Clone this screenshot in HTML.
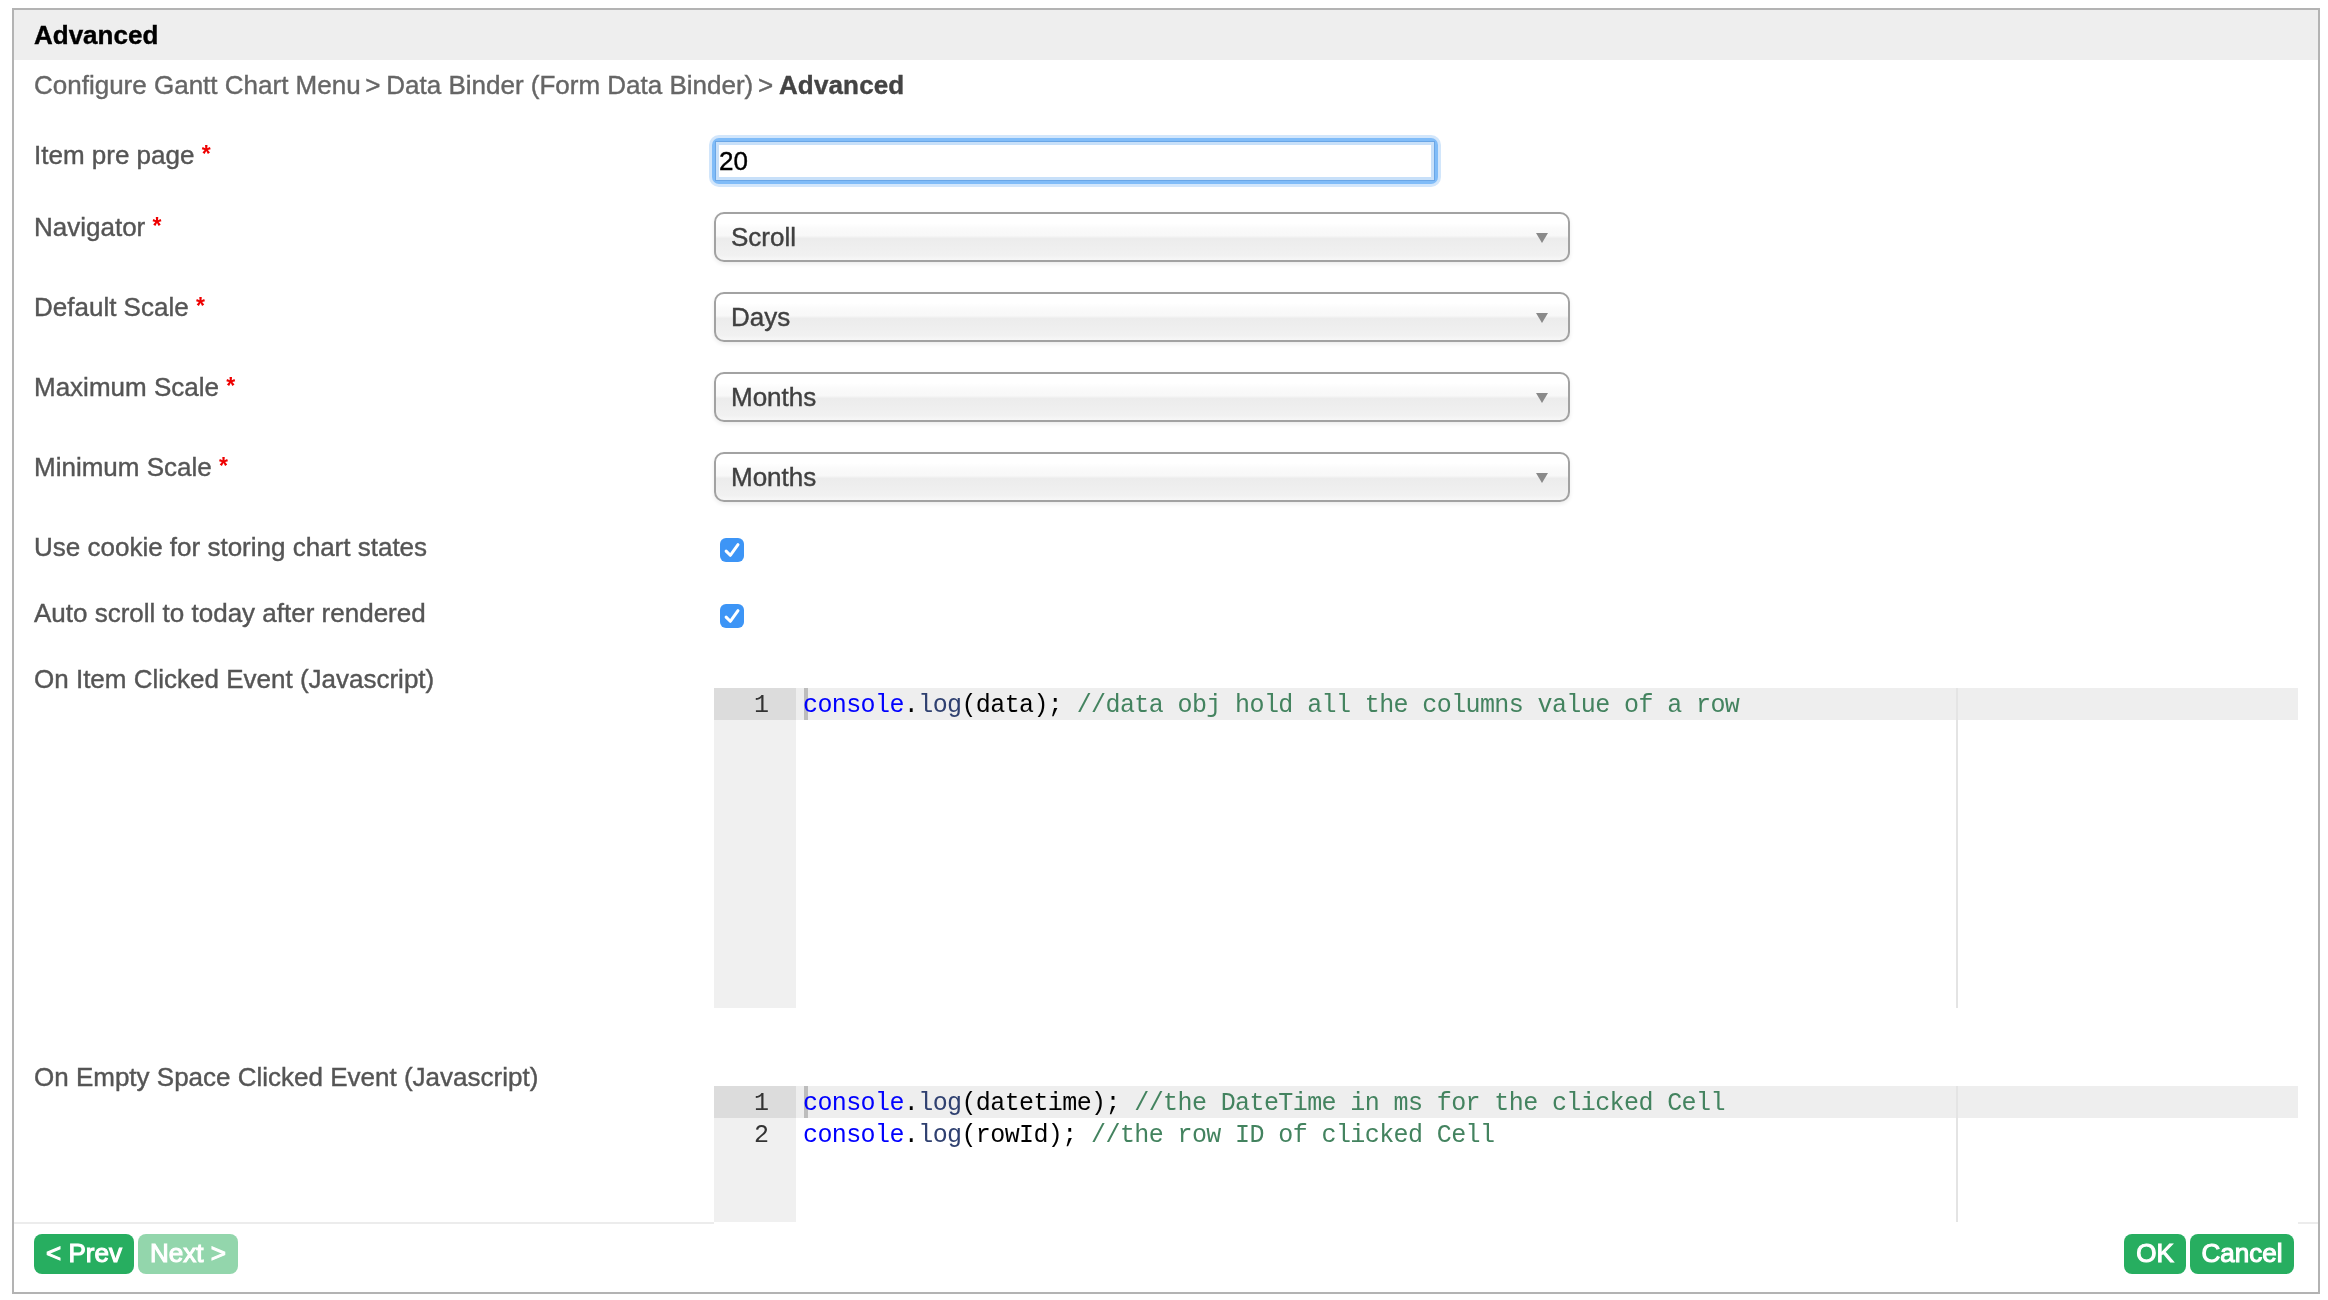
<!DOCTYPE html>
<html><head><meta charset="utf-8">
<style>
html,body{margin:0;padding:0;width:2328px;height:1300px;overflow:hidden;background:#fff;}
body{font-family:"Liberation Sans",sans-serif;position:relative;will-change:transform;}
.a{position:absolute;white-space:pre;}
.frame{position:absolute;left:12px;top:8px;width:2304px;height:1282px;border:2px solid #b3b3b3;}
.hdr{position:absolute;left:14px;top:10px;width:2304px;height:50px;background:#eeeeee;}
.t{position:absolute;white-space:pre;font-size:26px;line-height:32px;-webkit-text-stroke-width:0.4px;}
.lbl{color:#555;}
.req{color:#e00;font-weight:bold;font-size:23px;-webkit-text-stroke-width:0;position:relative;top:-2px;}
.gt{margin-left:-2.5px;margin-right:-1.5px;}
.sel{position:absolute;left:714px;width:852px;height:46px;border:2px solid #a2a2a2;border-radius:10px;
 background:linear-gradient(#ffffff 0%,#ffffff 20%,#fafafa 32%,#f8f8f8 47%,#ececec 53%,#f1f1f1 90%,#f7f7f7 100%);
 box-shadow:0 2px 4px rgba(0,0,0,0.08);}
.sel span{position:absolute;left:15px;top:7px;font-size:26px;line-height:32px;color:#404040;-webkit-text-stroke-width:0.4px;}
.arr{position:absolute;left:820px;top:19px;width:0;height:0;border-left:6px solid transparent;border-right:6px solid transparent;border-top:10px solid #8a8a8a;}
.cb{position:absolute;left:720px;width:24px;height:24px;border-radius:6px;background:#3d95f6;}
.cb svg{position:absolute;left:0;top:0;}
.ed{position:absolute;left:714px;width:1584px;background:#fff;overflow:hidden;}
.gut{position:absolute;left:0;top:0;width:82px;bottom:0;background:#f0f0f0;}
.al{position:absolute;left:0;width:1584px;height:32px;background:#eeeeee;}
.alg{position:absolute;left:0;width:82px;height:32px;background:#dcdcdc;}
.ln{position:absolute;left:0;width:55px;padding-top:2px;text-align:right;font-family:"Liberation Mono",monospace;font-size:25px;line-height:32px;color:#333;}
.code{position:absolute;left:89px;padding-top:2px;font-family:"Liberation Mono",monospace;font-size:25px;letter-spacing:-0.6px;line-height:32px;color:#000;white-space:pre;}
.cv{color:#0000ff}.cp{color:#2f4070}.cc{color:#43835f}
.cur{position:absolute;left:90px;width:4px;height:32px;background:#bdbdbd;}
.vr{position:absolute;left:1242px;top:0;width:2px;bottom:0;background:#e4e4e4;}
.btn{position:absolute;top:1234px;height:40px;border-radius:8px;background:#27ae60;color:#fff;font-size:26px;line-height:38px;text-align:center;-webkit-text-stroke:1.1px #fff;}
</style></head><body>
<div class="frame"></div>
<div class="hdr"></div>
<div class="t" style="left:34px;top:19px;font-weight:bold;color:#000;">Advanced</div>
<div class="t" style="left:34px;top:69px;color:#666;">Configure Gantt Chart Menu <span class="gt">&gt;</span> Data Binder (Form Data Binder) <span class="gt">&gt;</span> <b style="color:#444;letter-spacing:0.15px">Advanced</b></div>

<div class="t lbl" style="left:34px;top:139px;">Item pre page <span class="req">*</span></div>
<div class="t lbl" style="left:34px;top:211px;">Navigator <span class="req">*</span></div>
<div class="t lbl" style="left:34px;top:291px;">Default Scale <span class="req">*</span></div>
<div class="t lbl" style="left:34px;top:371px;">Maximum Scale <span class="req">*</span></div>
<div class="t lbl" style="left:34px;top:451px;">Minimum Scale <span class="req">*</span></div>
<div class="t lbl" style="left:34px;top:531px;">Use cookie for storing chart states</div>
<div class="t lbl" style="left:34px;top:597px;">Auto scroll to today after rendered</div>
<div class="t lbl" style="left:34px;top:663px;">On Item Clicked Event (Javascript)</div>
<div class="t lbl" style="left:34px;top:1061px;">On Empty Space Clicked Event (Javascript)</div>

<!-- focused input -->
<div class="a" style="left:709px;top:135px;width:732px;height:52px;border-radius:10px;background:#d2e6fb;"></div>
<div class="a" style="left:712px;top:138px;width:726px;height:46px;border-radius:7px;background:#80bcf8;"></div>
<div class="a" style="left:715px;top:141px;width:720px;height:40px;background:#6aa6e6;"></div>
<div class="a" style="left:716px;top:142px;width:718px;height:38px;background:#c8e0f9;"></div>
<div class="a" style="left:719px;top:145px;width:712px;height:32px;background:#fff;"></div>
<div class="t" style="left:719px;top:145px;color:#000;">20</div>

<div class="sel" style="top:212px;"><span>Scroll</span><i class="arr"></i></div>
<div class="sel" style="top:292px;"><span>Days</span><i class="arr"></i></div>
<div class="sel" style="top:372px;"><span>Months</span><i class="arr"></i></div>
<div class="sel" style="top:452px;"><span>Months</span><i class="arr"></i></div>

<div class="cb" style="top:538px;"><svg width="24" height="24" viewBox="0 0 24 24"><path d="M6.1 13.1 L10.3 17.3 L18 6.6" fill="none" stroke="#fff" stroke-width="3" stroke-linecap="round" stroke-linejoin="round"/></svg></div>
<div class="cb" style="top:604px;"><svg width="24" height="24" viewBox="0 0 24 24"><path d="M6.1 13.1 L10.3 17.3 L18 6.6" fill="none" stroke="#fff" stroke-width="3" stroke-linecap="round" stroke-linejoin="round"/></svg></div>

<div class="ed" style="top:688px;height:320px;">
  <div class="gut"></div>
  <div class="al" style="top:0;"></div>
  <div class="alg" style="top:0;"></div>
  <div class="vr"></div>
  <div class="ln" style="top:0;">1</div>
  <div class="cur" style="top:0;"></div>
  <div class="code" style="top:0;"><span class="cv">console</span>.<span class="cp">log</span>(data); <span class="cc">//data obj hold all the columns value of a row</span></div>
</div>

<div class="a" style="left:14px;top:1222px;width:700px;height:2px;background:#ececec;"></div>
<div class="a" style="left:2298px;top:1222px;width:20px;height:2px;background:#ececec;"></div>
<div class="ed" style="top:1086px;height:136px;">
  <div class="gut"></div>
  <div class="al" style="top:0;"></div>
  <div class="alg" style="top:0;"></div>
  <div class="vr"></div>
  <div class="ln" style="top:0;">1</div>
  <div class="ln" style="top:32px;">2</div>
  <div class="cur" style="top:0;"></div>
  <div class="code" style="top:0;"><span class="cv">console</span>.<span class="cp">log</span>(datetime); <span class="cc">//the DateTime in ms for the clicked Cell</span></div>
  <div class="code" style="top:32px;"><span class="cv">console</span>.<span class="cp">log</span>(rowId); <span class="cc">//the row ID of clicked Cell</span></div>
</div>

<div class="btn" style="left:34px;width:100px;">&lt; Prev</div>
<div class="btn" style="left:138px;width:100px;background:#93d6ac;">Next &gt;</div>
<div class="btn" style="left:2124px;width:62px;">OK</div>
<div class="btn" style="left:2190px;width:104px;">Cancel</div>
</body></html>
